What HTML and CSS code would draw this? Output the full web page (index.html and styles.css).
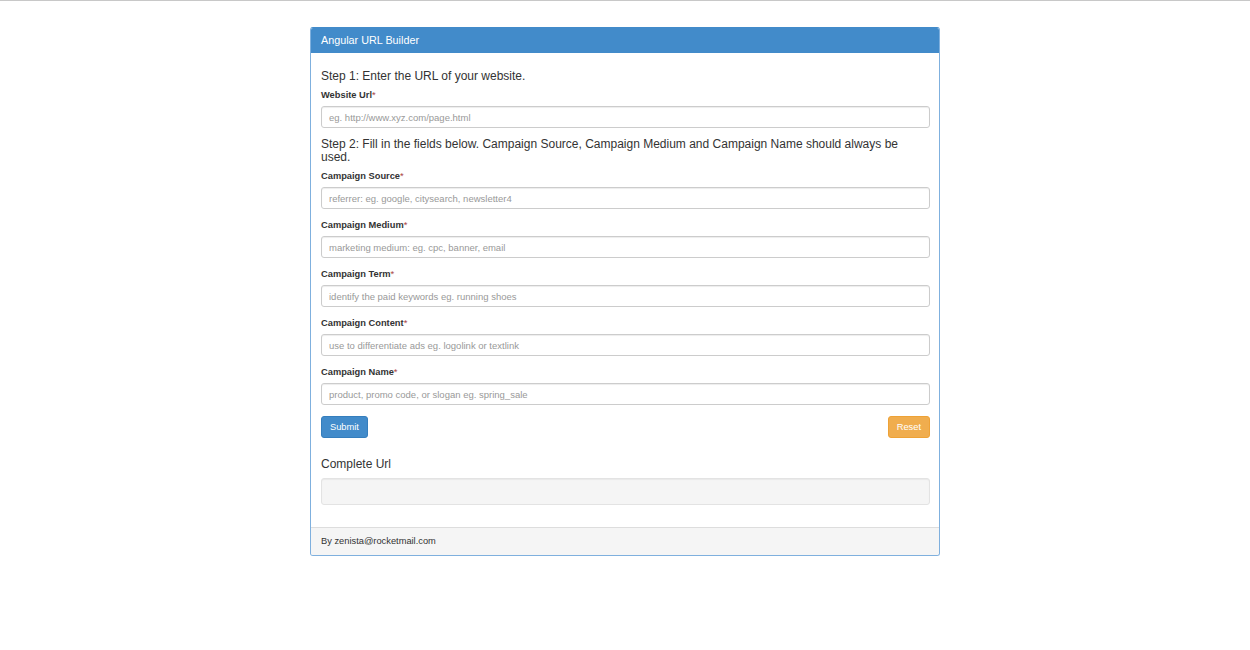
FILE: index.html
```html
<!DOCTYPE html>
<html>
<head>
<meta charset="utf-8">
<title>Angular URL Builder</title>
<link rel="stylesheet" href="styles.css">
</head>
<body>
<div class="panel">
  <div class="panel-heading">Angular URL Builder</div>
  <div class="panel-body">
    <h4 class="step">Step 1: Enter the URL of your website.</h4>
    <div class="form-group">
      <label class="label">Website Url<span class="req">*</span></label>
      <input class="input" type="text" placeholder="eg. http://www.xyz.com/page.html">
    </div>
    <h4 class="step">Step 2: Fill in the fields below. Campaign Source, Campaign Medium and Campaign Name should always be used.</h4>
    <div class="form-group">
      <label class="label">Campaign Source<span class="req">*</span></label>
      <input class="input" type="text" placeholder="referrer: eg. google, citysearch, newsletter4">
    </div>
    <div class="form-group">
      <label class="label">Campaign Medium<span class="req">*</span></label>
      <input class="input" type="text" placeholder="marketing medium: eg. cpc, banner, email">
    </div>
    <div class="form-group">
      <label class="label">Campaign Term<span class="req">*</span></label>
      <input class="input" type="text" placeholder="identify the paid keywords eg. running shoes">
    </div>
    <div class="form-group">
      <label class="label">Campaign Content<span class="req">*</span></label>
      <input class="input" type="text" placeholder="use to differentiate ads eg. logolink or textlink">
    </div>
    <div class="form-group">
      <label class="label">Campaign Name<span class="req">*</span></label>
      <input class="input" type="text" placeholder="product, promo code, or slogan eg. spring_sale">
    </div>
    <div class="actions">
      <button class="btn btn-primary" type="button">Submit</button>
      <button class="btn btn-warning" type="button">Reset</button>
    </div>
    <h4 class="step result-title">Complete Url</h4>
    <div class="well"></div>
  </div>
  <div class="panel-footer">By zenista@rocketmail.com</div>
</div>
</body>
</html>
```
FILE: styles.css
```css
* { box-sizing: border-box; }
html, body { margin: 0; padding: 0; }
body {
  border-top: 1px solid #c8c8c8;
  background: #fff;
  font-family: "Liberation Sans", Arial, sans-serif;
  color: #333;
  font-size: 9px;
}
.panel {
  width: 630px;
  margin: 26px auto 0;
  border: 1px solid #7fb0de;
  border-top-color: #428bca;
  border-radius: 3px;
  overflow: hidden;
}
.panel-heading {
  background: #428bca;
  color: #fff;
  font-size: 10.8px;
  line-height: 13px;
  padding: 6px 10px 6px;
}
.panel-body {
  padding: 11px 9px 10px 10px;
}
.step {
  font-size: 12px;
  line-height: 13px;
  font-weight: normal;
  margin: 6px 0 6px;
}
.form-group {
  margin-bottom: 10px;
}
.label {
  display: block;
  font-weight: bold;
  font-size: 9.3px;
  line-height: 13px;
  margin-bottom: 4px;
}
.req { color: #a94442; font-weight: normal; }
.input {
  display: block;
  width: 100%;
  height: 22px;
  border: 1px solid #ccc;
  border-radius: 3px;
  padding: 0 7px;
  font-family: inherit;
  font-size: 9.5px;
  color: #555;
  box-shadow: inset 0 1px 1px rgba(0,0,0,0.075);
}
.input::placeholder { color: #999; }
.actions {
  display: flex;
  justify-content: space-between;
  margin-top: 11px;
  margin-bottom: 20px;
}
.btn {
  height: 22px;
  border-radius: 3px;
  font-family: inherit;
  font-size: 9.3px;
  color: #fff;
  padding: 0 8px;
  border: 1px solid;
}
.btn-primary { background: #428bca; border-color: #357ebd; }
.btn-warning { background: #f0ad4e; border-color: #eea236; }
.result-title { margin-top: 6px; margin-bottom: 7px; }
.well {
  height: 27px;
  background: #f5f5f5;
  border: 1px solid #e3e3e3;
  border-radius: 3px;
  margin-bottom: 12px;
  box-shadow: inset 0 1px 1px rgba(0,0,0,0.05);
}
.panel-footer {
  background: #f5f5f5;
  border-top: 1px solid #ddd;
  padding: 7px 10px;
  font-size: 9.3px;
  line-height: 13px;
}
```
